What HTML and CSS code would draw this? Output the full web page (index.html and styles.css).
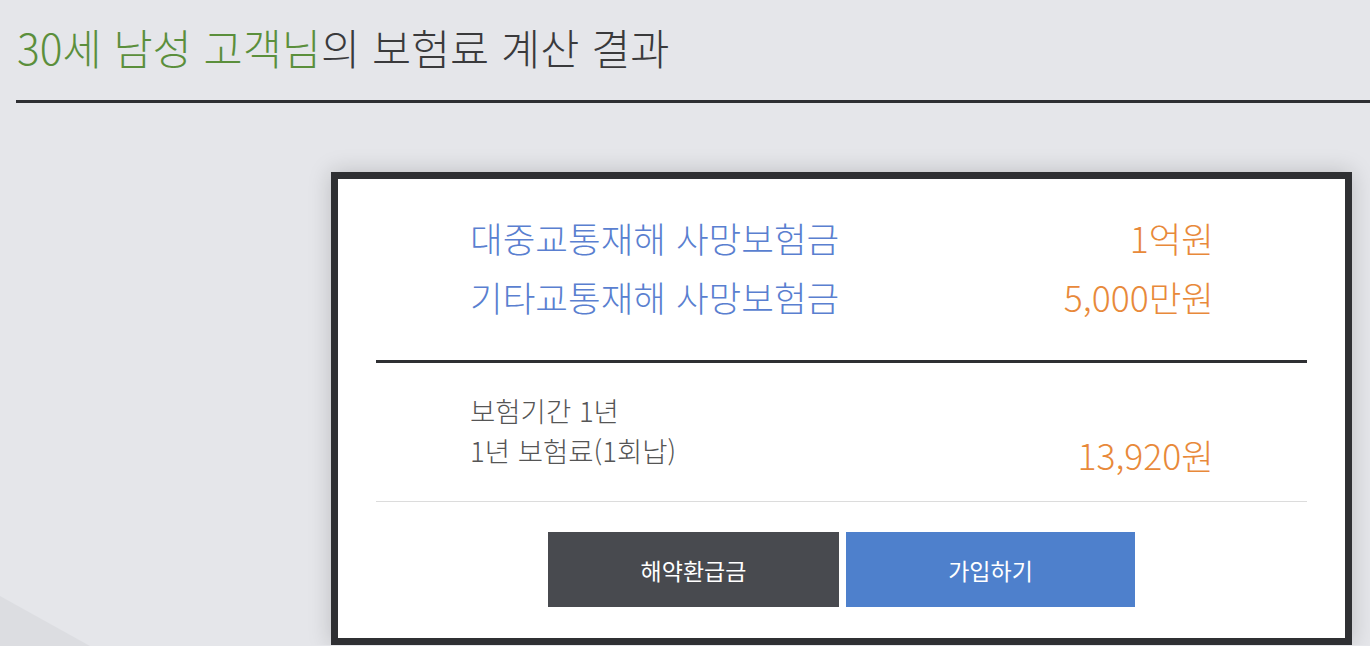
FILE: index.html
```html
<!DOCTYPE html>
<html lang="ko">

<head>
    <meta charset="UTF-8">
    <meta name="viewport" content="width=device-width, initial-scale=1.0">
    <title>보험료 계산 결과</title>
    <link rel="stylesheet" href="styles.css">
</head>

<body>
    <div class="bg-shape"></div>

    <!-- Title -->
    <h1 class="result-title"><span class="who">30세 남성 고객님</span>의 보험료 계산 결과</h1>

    <!-- Result card -->
    <div class="result-card">
        <div class="coverage">
            <div class="coverage-row">
                <span class="label">대중교통재해 사망보험금</span>
                <span class="amount">1억원</span>
            </div>
            <div class="coverage-row">
                <span class="label">기타교통재해 사망보험금</span>
                <span class="amount">5,000만원</span>
            </div>
        </div>

        <div class="premium">
            <div class="premium-info">
                <p>보험기간 1년</p>
                <p>1년 보험료(1회납)</p>
            </div>
            <div class="premium-price">13,920원</div>
        </div>

        <div class="actions">
            <a class="btn btn-dark" href="#">해약환급금</a>
            <a class="btn btn-blue" href="#">가입하기</a>
        </div>
    </div>
</body>

</html>
```

FILE: styles.css
```css
body {
    font-family: 'Noto Sans CJK KR', 'Noto Sans', sans-serif;
    margin: 0;
    background: #e5e6ea;
    color: #333;
    overflow: hidden;
}

.bg-shape {
    position: fixed;
    left: 0;
    bottom: 0;
    width: 90px;
    height: 50px;
    background: #dcdde1;
    clip-path: polygon(0 0, 100% 100%, 0 100%);
}

.result-title {
    margin: 0 0 0 16px;
    padding: 18px 0 24px 1px;
    font-size: 42.5px;
    font-weight: 300;
    line-height: 58px;
    color: #3a3a3c;
    border-bottom: 3px solid #2e2f33;
}

.result-title .who {
    color: #5b8f3c;
}

.result-card {
    position: relative;
    width: 1021px;
    margin: 69px 0 0 331px;
    padding: 0 38px;
    box-sizing: border-box;
    background: #fff;
    border: 7px solid #2f3033;
    box-shadow: 0 0 22px rgba(0, 0, 0, 0.18);
}

.coverage {
    padding: 29px 93px 34px 94px;
    border-bottom: 3px solid #2f3033;
}

.coverage-row {
    display: flex;
    justify-content: space-between;
    font-size: 35.5px;
    font-weight: 300;
    line-height: 59px;
}

.coverage-row .label {
    color: #5a7fd0;
}

.coverage-row .amount,
.premium-price {
    color: #e8893a;
}

.premium {
    display: flex;
    justify-content: space-between;
    padding: 27px 93px 31px 94px;
    border-bottom: 1px solid #dcdcdc;
}

.premium-info p {
    margin: 0;
    font-size: 27.5px;
    font-weight: 300;
    line-height: 40px;
    color: #555;
}

.premium-price {
    align-self: flex-end;
    font-size: 35.5px;
    font-weight: 300;
    line-height: 30px;
}

.actions {
    display: flex;
    justify-content: center;
    gap: 7px;
    padding: 30px 0 31px;
}

.btn {
    display: flex;
    align-items: center;
    justify-content: center;
    height: 75px;
    color: #fff;
    font-size: 23px;
    text-decoration: none;
}

.btn-dark {
    width: 291px;
    background: #484a4f;
}

.btn-blue {
    width: 289px;
    background: #4e80cc;
}
```
